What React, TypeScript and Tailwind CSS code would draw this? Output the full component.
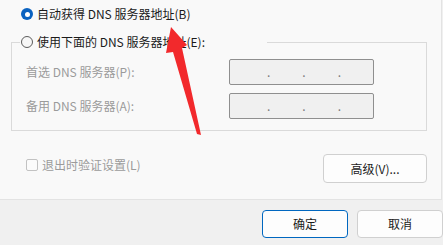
import React from 'react'

const font = { fontFamily: '"Noto Sans CJK SC", "Noto Sans", sans-serif' }

function IpBox() {
  return (
    <div className="flex h-[26px] w-[145px] items-center gap-[32px] rounded-[2px] border border-[#8f8f8f] bg-[#f0f0f0] pl-[37px] text-[12px] leading-4 text-[#7a7a7a]">
      <span>.</span>
      <span>.</span>
      <span>.</span>
    </div>
  )
}

function ServerRow({ label }: { label: string }) {
  return (
    <div className="flex items-center">
      <span className="w-[217px] pl-[14px] text-[12px] leading-4 text-[#9b9b9b]">{label}</span>
      <IpBox />
    </div>
  )
}

function RedArrow() {
  return (
    <svg
      className="pointer-events-none absolute left-0 top-0"
      width="443"
      height="245"
      viewBox="0 0 443 245"
    >
      <polygon
        points="171,27 187,45 182,48 201,135 197,134 173,52 166,53"
        fill="#f2292c"
      />
    </svg>
  )
}

export default function App() {
  return (
    <div className="relative h-[245px] w-[443px] overflow-hidden bg-[#f0f0f0]" style={font}>
      <div className="h-[200px] w-[442px] border-r border-b border-[#e3e3e3] bg-[#f9f9f9] pt-[6px]">
        <label className="flex items-center pl-[21px] text-[12px] leading-4 text-[#1b1b1b]">
          <span className="flex h-[12px] w-[12px] items-center justify-center rounded-full bg-[#0a62c0]">
            <span className="h-[5px] w-[5px] rounded-full bg-white" />
          </span>
          <span className="ml-[4px]">自动获得 DNS 服务器地址(B)</span>
        </label>

        <fieldset className="ml-[11px] mt-[12px] w-[416px] border border-[#dadada] px-0 pt-[9px] pb-[11px]">
          <legend className="ml-[8px] flex w-[247px] items-center pl-[1px] text-[12px] leading-4 text-[#1b1b1b]">
            <span className="h-[12px] w-[12px] rounded-full border border-[#5c5c5c] bg-[#f7f7f7]" />
            <span className="ml-[4px]">使用下面的 DNS 服务器地址(E):</span>
          </legend>
          <div className="flex flex-col gap-2">
            <ServerRow label="首选 DNS 服务器(P):" />
            <ServerRow label="备用 DNS 服务器(A):" />
          </div>
        </fieldset>

        <div className="mt-[23px] flex w-[427px] items-start justify-between pl-[26px]">
          <label className="mt-[3px] flex items-center text-[12px] leading-4 text-[#9b9b9b]">
            <span className="h-[12px] w-[12px] rounded-[2px] border border-[#c2c2c2] bg-[#fbfbfb]" />
            <span className="ml-[4px]">退出时验证设置(L)</span>
          </label>
          <button
            type="button"
            className="h-[29px] w-[104px] rounded-[4px] border border-[#d0d0d0] bg-[#fdfdfd] text-[12px] leading-4 text-[#1b1b1b]"
          >
            高级(V)...
          </button>
        </div>
      </div>

      <div className="flex justify-end gap-[9px] pt-[10px]">
        <button
          type="button"
          className="h-[28px] w-[86px] rounded-[4px] border border-[#0067c0] bg-[#fdfdfd] text-[12px] leading-4 text-[#1b1b1b]"
        >
          确定
        </button>
        <button
          type="button"
          className="h-[28px] w-[86px] rounded-[4px] border border-[#d0d0d0] bg-[#fdfdfd] text-[12px] leading-4 text-[#1b1b1b]"
        >
          取消
        </button>
      </div>

      <RedArrow />
    </div>
  )
}
